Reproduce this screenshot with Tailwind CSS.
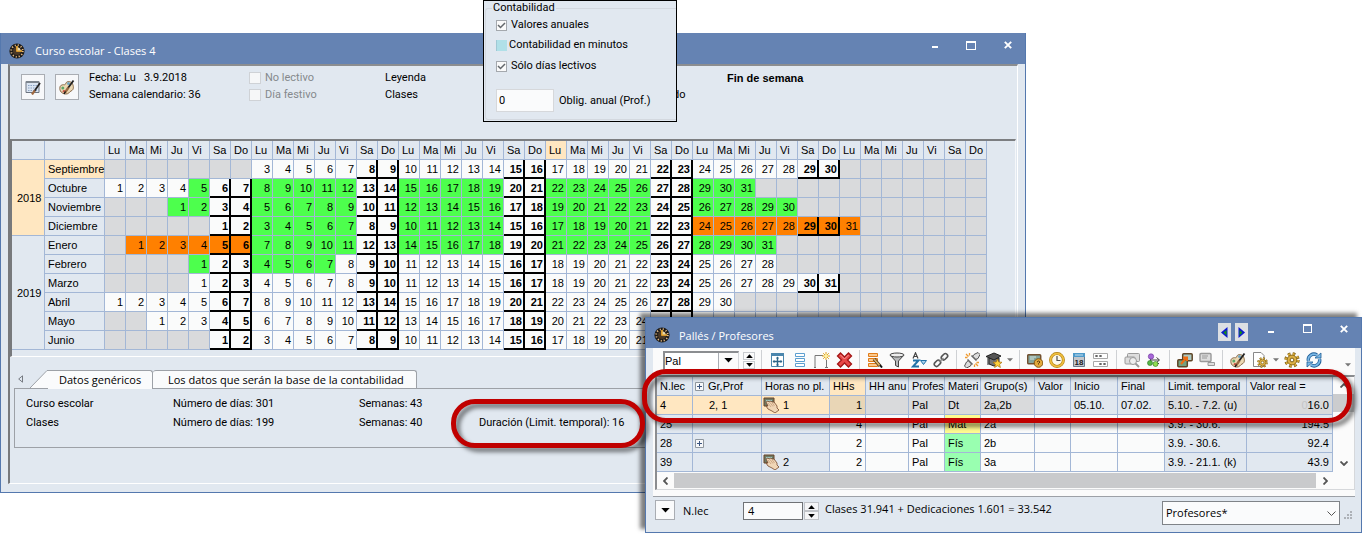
<!DOCTYPE html>
<html lang="es">
<head>
	<meta charset="UTF-8">
	<meta name="viewport" content="width=device-width, initial-scale=1.0">
	<title>Curso escolar - Clases 4</title>
	<script src="https://cdn.jsdelivr.net/npm/@tailwindcss/browser@4"></script>
</head>
<body class="bg-white min-h-screen overflow-hidden relative font-['Liberation_Sans',Arial,sans-serif] text-[11px] leading-[18px] text-black">

	<!-- Shared icons -->
	<svg class="hidden">
		<symbol id="clock" viewBox="0 0 16 16">
			<circle cx="8" cy="8" r="7.6" fill="#1c1a18"/>
			<circle cx="8" cy="8" r="5.8" fill="none" stroke="#e8bd88" stroke-width="1.800" stroke-dasharray="1.1 1.94"/>
			<circle cx="8" cy="8" r="4" fill="#4a3826"/>
			<path d="M8 3v5h5" fill="none" stroke="#ffb52e" stroke-width="1.6"/>
			<path d="M8.6 4.2a4 4 0 0 1 3.2 3.2H8.6z" fill="#e8d9b0"/>
		</symbol>
		<symbol id="palette" viewBox="0 0 16 16">
			<path d="M1 8c-1 4 2 7 6 7 3 0 3-2 5-3 3-1 3-5 1-8-2-2-5-2-6 0-1 3-2 1-4 2C1.600 6.500 1.200 7 1 8z" fill="#ecd9b4" stroke="#8a6a48"/>
			<circle cx="3.800" cy="9" r="1.500" fill="#5aa868"/><circle cx="5" cy="12.300" r="1.300" fill="#cc5548"/><circle cx="9.500" cy="4.500" r="1.500" fill="#6fa6c4"/>
			<path d="M14.500 1.500 9 9" stroke="#222" stroke-width="1.800"/><path d="M9.500 8.500 6 13.500" stroke="#9a6a42" stroke-width="2.400"/><path d="M6.500 12.500 5 15" stroke="#111" stroke-width="1.400"/>
		</symbol>
		<symbol id="hand" viewBox="0 0 16 16">
			<path d="M1 1h10v8H1z" fill="#6d7a66" stroke="#6b4426"/><path d="M3 3h6v3H3z" fill="#9fc4bd"/>
			<path d="M3 5l2-1 1 1 2-1 1 1 2 0 3 4 0 2 2 2-4 3-3-2-4-2-2-3 2 0z" fill="#f0d6b6" stroke="#76482b" stroke-width=".8"/>
			<path d="M5 6l3 4M7 5.500l3 4M9 5.500l2.500 3.500" stroke="#b88c66" stroke-width=".6"/>
		</symbol>
		<symbol id="caret" viewBox="0 0 10 6"><path d="M0 0h10L5 5.500z" fill="currentColor"/></symbol>
		<symbol id="gear" viewBox="0 0 16 16">
			<circle cx="8" cy="8" r="6" fill="none" stroke="#7d5e14" stroke-width="3.400" stroke-dasharray="2.500 2.212"/>
			<circle cx="8" cy="8" r="6" fill="none" stroke="#d9ab38" stroke-width="2" stroke-dasharray="2 2.712"/>
			<circle cx="8" cy="8" r="4.900" fill="#dcb044" stroke="#7d5e14" stroke-width=".8"/>
			<circle cx="8" cy="8" r="1.900" fill="#fbfbfb" stroke="#7d5e14"/>
		</symbol>
		<symbol id="plus" viewBox="0 0 9 9"><path d="M.5.5h8v8h-8z" fill="#f7f8fa" stroke="#8f979f"/><path d="M2 4.500h5M4.500 2v5" stroke="#3b5580"/></symbol>
		<symbol id="close" viewBox="0 0 8 8"><path d="M.8.8l6.400 6.400M7.200.8.8 7.200" stroke="#fff" stroke-width="1.900"/></symbol>
	</svg>

	<!-- Calendar window -->
	<section class="absolute left-0 top-[33px] w-[1026px] bg-[#e1e8f0] border border-t-0 border-[#5478ae] pb-2">
		<header class="h-[31px] bg-[#6583b3] flex items-center pl-2 pr-[13px] pt-1 text-white">
			<svg class="w-4 h-4"><use href="#clock"/></svg>
			<h1 class="ml-[10px] pt-px flex-1 font-['Open_Sans',sans-serif]">Curso escolar - Clases 4</h1>
			<div class="flex items-center gap-7 pb-[15px] h-full">
				<button aria-label="Minimizar" class="w-[6px] h-[2px] mt-2 bg-white"></button>
				<button aria-label="Maximizar" class="w-[10px] h-[9px] mt-1 border border-t-2 border-white"></button>
				<button aria-label="Cerrar" class="mt-1"><svg class="w-2 h-2"><use href="#close"/></svg></button>
			</div>
		</header>

		<div class="mx-[7px] border-t-2 border-l-2 border-r border-b border-t-[#8b8d90] border-l-[#77797c] border-r-white border-b-white">
			<!-- Info and legend -->
			<div class="h-[73px] flex pl-[11px] gap-[10px] font-[Roboto,sans-serif]">
				<button aria-label="Calendario" class="mt-2 w-6 h-[26px] border border-[#a9adb3] bg-[#f7f8fa] flex items-center justify-center">
					<svg class="w-4 h-4" viewBox="0 0 16 16">
						<path d="M1 2.500h13v11H1z" fill="#dbe5f2" stroke="#6c7480"/><path d="M1 2h13v2H1z" fill="#7d858e"/>
						<path d="M3 6.500h9M3 9h9M3 11.500h9" stroke="#8ba3c4" stroke-dasharray="1.500 1"/>
						<path d="M15 4 9.500 12" stroke="#222" stroke-width="1.800"/><path d="M9.800 11.500 7 15.500" stroke="#a06a42" stroke-width="2.200"/>
					</svg>
				</button>
				<button aria-label="Colores" class="mt-2 w-6 h-[26px] border border-[#a9adb3] bg-[#f7f8fa] flex items-center justify-center">
					<svg class="w-4 h-4"><use href="#palette"/></svg>
				</button>
				<div class="pt-[3px] grid grid-cols-[160px_136px_288px_54px_1fr] grid-rows-[17px_18px] flex-1">
					<div class="whitespace-pre">Fecha: Lu   3.9.2018</div>
					<label class="flex items-center gap-1 text-[#85888c]"><input type="checkbox" disabled class="appearance-none w-3 h-3 bg-[#f6f7f8] border border-[#cfd2d6]">No lectivo</label>
					<div>Leyenda</div>
					<div></div>
					<div class="font-bold font-['Liberation_Sans',Arial,sans-serif]">Fin de semana</div>
					<div>Semana calendario: 36</div>
					<label class="flex items-center gap-1 text-[#85888c]"><input type="checkbox" disabled class="appearance-none w-3 h-3 bg-[#f6f7f8] border border-[#cfd2d6]">Día festivo</label>
					<div>Clases</div>
					<div>do</div>
				</div>
			</div>

			<!-- Calendar -->
			<div class="border-t-2 border-l-2 border-b border-t-[#7c7e81] border-l-[#77797c] border-b-white pb-[6px] mr-px border-r border-r-[#f5f7fa]">
				<table class="table-fixed border-separate border-spacing-0 w-[975px]">
					<colgroup id="calendar-cols"><col class="w-[33px]"><col class="w-[60px]"></colgroup>
					<thead><tr id="calendar-head"></tr></thead>
					<tbody id="calendar-body"></tbody>
				</table>
			</div>

			<!-- Tabs -->
			<div class="pt-[13px] pl-2 flex font-['Open_Sans',sans-serif] font-medium leading-4">
				<svg class="w-[5px] h-2 mt-[5px] mr-[7px]" viewBox="0 0 5 8"><path d="M4.500.8v6.400L.7 4z" fill="none" stroke="#777c83"/></svg>
				<svg class="w-[18px] h-[18px] -mb-px relative" viewBox="0 0 18 18"><path d="M0 18 17 .5h1V18z" fill="#fafbfc"/><path d="M0 18 17 .5h1" fill="none" stroke="#9da1a7"/></svg>
				<button class="h-[19px] -mb-px relative w-[105px] pl-[11px] text-left bg-[#fafbfc] border-t border-r border-[#9da1a7] rounded-tr-[3px]">Datos genéricos</button>
				<button class="h-[18px] pr-3 pl-[15px] bg-[#fafbfc] border-t border-r border-[#9da1a7] rounded-t-[3px]">Los datos que serán la base de la contabilidad</button>
			</div>
			<div class="ml-1 mb-[35px] h-[60px] border border-r-0 border-[#9da1a7] pl-[11px] pt-[6px] grid grid-cols-[147px_186px_120px_1fr] grid-rows-[19px_19px] font-[Roboto,sans-serif]">
				<div>Curso escolar</div><div>Número de días: 301</div><div>Semanas: 43</div><div></div>
				<div>Clases</div><div>Número de días: 199</div><div>Semanas: 40</div><div>Duración (Limit. temporal): 16</div>
			</div>
		</div>
	</section>

	<!-- Accounting options -->
	<section class="absolute left-[483px] top-0 w-[194px] h-[122px] border border-black bg-[#e1e8f0] pl-px pt-[6px] font-[Roboto,sans-serif]">
		<fieldset class="h-[113px] border border-r-0 border-[#d3d8df] rounded-l-[3px] pl-[10px]">
			<legend class="px-px -ml-1 leading-[2px]">Contabilidad</legend>
			<label class="flex items-center gap-1 mt-[7px]">
				<input type="checkbox" checked class="appearance-none w-[11px] h-[11px] bg-[#fafafa] border border-[#a4a8ad]">
				<svg class="w-[9px] h-[7px] -ml-[14px] mr-px" viewBox="0 0 9 7"><path d="M1 3l2.500 2.500L8 1" fill="none" stroke="#63676b" stroke-width="1.500"/></svg>Valores anuales
			</label>
			<label class="flex items-center gap-[2px] mt-[2px]">
				<input type="checkbox" class="appearance-none w-[11px] h-[11px] bg-[#b0e0e8] border-l border-[#a0c8d4]">Contabilidad en minutos
			</label>
			<label class="flex items-center gap-1 mt-[3px]">
				<input type="checkbox" checked class="appearance-none w-[11px] h-[11px] bg-[#fafafa] border border-[#a4a8ad]">
				<svg class="w-[9px] h-[7px] -ml-[14px] mr-px" viewBox="0 0 9 7"><path d="M1 3l2.500 2.500L8 1" fill="none" stroke="#63676b" stroke-width="1.500"/></svg>Sólo días lectivos
			</label>
			<div class="flex mt-[14px] items-center">
				<input id="oblig" value="0" class="w-[58px] h-[23px] px-[2px] bg-[#fafbfc] border border-[#d6d8db]">
				<label for="oblig" class="ml-[5px] whitespace-nowrap">Oblig. anual (Prof.)</label>
			</div>
		</fieldset>
	</section>

	<!-- Lessons window -->
	<section class="absolute left-[645px] top-[317px] w-[717px] bg-[#e1e8f0] border border-[#5478ae] shadow-[-5px_-4px_4px_rgba(0,0,0,0.5)]">
		<header class="h-[30px] bg-[#6583b3] flex pl-2 pr-[13px] text-white">
			<svg class="w-4 h-4 mt-[9px]"><use href="#clock"/></svg>
			<h2 class="ml-[9px] mt-[9px] flex-1 font-['Open_Sans',sans-serif]">Pallés / Profesores</h2>
			<button aria-label="Anterior" class="mt-[5px] mr-1 w-[13px] h-[18px] bg-[#dcdfe3] flex items-center justify-center"><svg class="w-[7px] h-[11px]" viewBox="0 0 7 11"><path d="M6.500 0v11L0 5.500z" fill="#0b18d0"/><path d="M5.500 3v5.500L2.500 5.500z" fill="#169016"/></svg></button>
			<button aria-label="Siguiente" class="mt-[5px] mr-5 w-[13px] h-[18px] bg-[#dcdfe3] flex items-center justify-center"><svg class="w-[7px] h-[11px]" viewBox="0 0 7 11"><path d="M.5 0v11L7 5.500z" fill="#0b18d0"/><path d="M1.500 3v5.500l3-3z" fill="#169016"/></svg></button>
			<button aria-label="Minimizar" class="w-[6px] h-[2px] mt-[13px] mr-[29px] bg-white"></button>
			<button aria-label="Maximizar" class="w-[9px] h-[9px] mt-[6px] mr-7 border border-t-2 border-white"></button>
			<button aria-label="Cerrar" class="mt-[7px] h-2"><svg class="w-2 h-2"><use href="#close"/></svg></button>
		</header>

		<!-- Toolbar -->
		<div class="ml-[7px] mr-[6px] h-[24px] bg-[#fbfbfb] flex items-center pl-[10px] text-[#444]">
			<div class="flex w-[76px] h-[19px] border-2 border-r border-b border-[#8b8d90] border-r-[#d6d8db] border-b-[#d6d8db]">
				<input aria-label="Profesor" value="Pal" class="w-[53px] bg-white text-black">
				<button aria-label="Abrir lista" class="w-[20px] border-l border-[#a9adb3] flex items-center justify-center text-black"><svg class="w-[9px] h-[5px]"><use href="#caret"/></svg></button>
			</div>
			<div class="ml-1 mr-[9px] flex flex-col gap-px w-3 text-black">
				<button aria-label="Subir" class="h-2 border border-[#c9ccd0] flex items-center justify-center"><svg class="w-[7px] h-1 rotate-180"><use href="#caret"/></svg></button>
				<button aria-label="Bajar" class="h-2 border border-[#c9ccd0] flex items-center justify-center"><svg class="w-[7px] h-1"><use href="#caret"/></svg></button>
			</div>
			<i class="w-px h-5 bg-[#cfd1d4] -ml-[3px] mr-[5px]"></i>
			<button aria-label="Ajustar ventana" class="w-[22px] flex justify-center"><svg class="w-4 h-4" viewBox="0 0 16 16"><path d="M1.500 1.500h12v13h-12z" fill="#fff" stroke="#4b86ad"/><path d="M1 1h13v3H1z" fill="#4b86ad"/><path d="M7.500 5v9M3 9.500h9" stroke="#2e6688" stroke-width="1.400"/><path d="M6 6.500l1.500-2L9 6.500zM6 12.500l1.500 2 1.500-2zM4.500 8v3l-2-1.500zM10.500 8v3l2-1.500z" fill="#2e6688"/></svg></button>
			<button aria-label="Filas" class="w-[22px] flex justify-center"><svg class="w-4 h-4" viewBox="0 0 16 16"><path d="M3.500 1.500h9v3h-9zM3.500 6.500h9v3h-9zM3.500 11.500h9v3h-9z" fill="#fff" stroke="#5d9fd0"/></svg></button>
			<button aria-label="Nuevo" class="w-[22px] flex justify-center"><svg class="w-4 h-4" viewBox="0 0 16 16"><path d="M1 15.500V3.500h8M12.500 8v7.500M0 15.500h2M11 15.500h3" fill="none" stroke="#777"/><path d="M12 0v8M8 4h8M9.200 1.200l5.600 5.600M14.800 1.200 9.200 6.800" stroke="#e0a21c"/><circle cx="12" cy="4" r="1.700" fill="#fff3a0"/></svg></button>
			<button aria-label="Borrar" class="w-[22px] flex justify-center"><svg class="w-[17px] h-4" viewBox="0 0 16 16"><path d="M4 1 8 5l4-4 3 3-4 4 4 4-3 3-4-4-4 4-3-3 4-4-4-4z" fill="#e84747" stroke="#a31515" stroke-width="1.300"/><path d="M4 3l4 4 4-4" fill="none" stroke="#f89898"/></svg></button>
			<i class="w-px h-5 bg-[#cfd1d4] mx-1"></i>
			<button aria-label="Editar filas" class="w-[22px] flex justify-center"><svg class="w-4 h-4" viewBox="0 0 16 16"><path d="M1.500 1.500h9v3h-9zM1.500 6.500h9v3h-9zM1.500 11.500h9v3h-9z" fill="#fbc98d" stroke="#e07b18"/><path d="M7 7l6 7" stroke="#4d3a22" stroke-width="3.400"/><path d="M7 7l6 7" stroke="#d9b26a" stroke-width="1.800"/><path d="M13 13l2 2.500" stroke="#111" stroke-width="2"/></svg></button>
			<button aria-label="Filtro" class="w-[22px] flex justify-center"><svg class="w-4 h-4" viewBox="0 0 16 16"><path d="M1 3h14L9.500 9v6l-3-1.500V9z" fill="#b8babc" stroke="#444"/><ellipse cx="8" cy="3" rx="7" ry="2" fill="#eee" stroke="#444"/></svg></button>
			<button aria-label="Ordenar" class="w-[22px] flex justify-center"><svg class="w-4 h-4" viewBox="0 0 16 16"><path d="M2 6.500 4.500.8 7 6.500M3 4.500h3" fill="none" stroke="#444" stroke-width="1.200"/><path d="M2 8.500h5.500L2 14.500h6" fill="none" stroke="#2272a8" stroke-width="2"/><path d="M9.500 8.500h6l-3 4z" fill="#a9d0ea" stroke="#2272a8"/></svg></button>
			<button aria-label="Vincular" class="w-[22px] flex justify-center"><svg class="w-4 h-4" viewBox="0 0 16 16" fill="none" stroke="#555"><rect x="8" y="2.500" width="7" height="4.500" rx="2.200" transform="rotate(-45 11.500 4.800)" stroke-width="1.600"/><rect x="1" y="9" width="7" height="4.500" rx="2.200" transform="rotate(-45 4.500 11.300)" stroke-width="1.600"/><path d="M6 10l4.500-4" stroke="#888" stroke-width="1.500"/></svg></button>
			<i class="w-px h-5 bg-[#cfd1d4] mx-1"></i>
			<button aria-label="Conectar" class="w-[22px] flex justify-center"><svg class="w-4 h-4" viewBox="0 0 16 16"><path d="M8.500 4.500l3 3 2.500-1 2-4-2-2-4 2z" fill="#ddd" stroke="#555"/><path d="M4.500 8.500l3 3-1 2.500-4 2-2-2 2-4z" fill="#ddd" stroke="#555"/><path d="M7.500 3.500l5 5M3.500 7.500l5 5" stroke="#666" stroke-width="1.600"/><path d="M2 2l2.500 2.500M5.500 1v2.500M1 5.500h2.500M14 14l-2.500-2.500M15 10.500h-2.500M10.500 15v-2.500" stroke="#ef9b31" stroke-width="1.300"/></svg></button>
			<button aria-label="Alumnos" class="w-[22px] flex justify-center"><svg class="w-4 h-4" viewBox="0 0 16 16"><path d="M3 6v6l5 2 5-2V6z" fill="#777" stroke="#222"/><path d="M0 4.500 8 1l7 3-7 4z" fill="#555" stroke="#222"/><path d="M2 6v7" stroke="#222"/><path d="M11.500 7l1.300 3 3.200.3-2.400 2 .8 3.200-2.900-1.800-2.900 1.800.8-3.200-2.400-2 3.200-.3z" fill="#ffd23c" stroke="#a87008" stroke-width=".7"/></svg></button>
			<span class="w-[10px] flex justify-center text-[#777]"><svg class="w-[6px] h-1"><use href="#caret"/></svg></span>
			<i class="w-px h-5 bg-[#cfd1d4] mx-1"></i>
			<button aria-label="Pizarra" class="w-[22px] flex justify-center"><svg class="w-4 h-4" viewBox="0 0 16 16"><rect x=".7" y="2.700" width="13" height="9" rx="1" fill="#85a59d" stroke="#72502f" stroke-width="1.500"/><path d="M3 5h6M3 7h4" stroke="#d5e5df"/><circle cx="11.500" cy="11" r="4.300" fill="#e2a93b" stroke="#875810"/><path d="M10 10q1.500-2 3 0l-1.500 1.500v1" fill="none" stroke="#5c3a06"/></svg></button>
			<button aria-label="Hora" class="w-[22px] flex justify-center"><svg class="w-4 h-4" viewBox="0 0 16 16"><circle cx="8" cy="8" r="6.400" fill="#fdf9ec" stroke="#ad7d0d" stroke-width="3"/><circle cx="8" cy="8" r="6.400" fill="none" stroke="#f0c040" stroke-width="1.700"/><path d="M8 4v4.500h3.500" fill="none" stroke="#4b4b4b" stroke-width="1.200"/></svg></button>
			<button aria-label="Calendario" class="w-[22px] flex justify-center"><svg class="w-4 h-4" viewBox="0 0 16 16"><path d="M2.500 1.500h11v13h-11z" fill="#c3c7cc" stroke="#6b7b8c"/><path d="M2 1h12v4H2z" fill="#4e9aca"/><path d="M4 3h8" stroke="#c6e0f0"/><text x="8" y="13" font-size="8" font-weight="bold" text-anchor="middle" fill="#222">18</text></svg></button>
			<button aria-label="Campos" class="w-[22px] flex justify-center"><svg class="w-4 h-4" viewBox="0 0 16 16"><path d="M.5 1.500h14v5H.5zM.5 9.500h14v5H.5z" fill="#fff" stroke="#a8a8a8"/><path d="M2.500 3l2 2M4.500 3l-2 2M6.500 3l2 2M8.500 3l-2 2M6.500 11l2 2M8.500 11l-2 2M10.500 11l2 2M12.500 11l-2 2" stroke="#333"/></svg></button>
			<i class="w-px h-5 bg-[#cfd1d4] mx-1"></i>
			<button aria-label="Buscar" class="w-[22px] flex justify-center"><svg class="w-4 h-4" viewBox="0 0 16 16" fill="#ddd" stroke="#999"><rect x="3.500" y="1.500" width="12" height="8" rx="1"/><rect x="1" y="5" width="10" height="7" rx="1"/><circle cx="9" cy="9" r="3.500" fill="#eee"/><path d="M11.500 11.500 15 15" stroke-width="2"/></svg></button>
			<button aria-label="Nodos" class="w-[22px] flex justify-center"><svg class="w-4 h-4" viewBox="0 0 16 16"><path d="M4.500 4.500v6M5 8h8M8 11.500h5M10.500 5.500 13.500 8l-3 2.500" fill="none" stroke="#444"/><circle cx="5" cy="4.500" r="2.700" fill="#a868d8" stroke="#6a3098" stroke-width=".6"/><circle cx="4" cy="11" r="2.500" fill="#58b648" stroke="#2b7420" stroke-width=".6"/><circle cx="9.500" cy="12" r="2.500" fill="#90dc50" stroke="#2b7420" stroke-width=".6"/></svg></button>
			<i class="w-px h-5 bg-[#cfd1d4] mx-1"></i>
			<button aria-label="Mover" class="w-[22px] flex justify-center"><svg class="w-4 h-4" viewBox="0 0 16 16"><rect x="5.700" y="1.700" width="9.500" height="7" rx="1" fill="#aecac2" stroke="#5f4526" stroke-width="1.500"/><rect x=".8" y="7.700" width="9.500" height="7" rx="1" fill="#74a080" stroke="#5f4526" stroke-width="1.500"/><path d="M4 12 9 6M6 5.500h4V9" fill="none" stroke="#f06c12" stroke-width="2"/></svg></button>
			<button aria-label="Ocultar" class="w-[22px] flex justify-center"><svg class="w-4 h-4" viewBox="0 0 16 16" fill="#ddd" stroke="#999"><rect x="1" y="1.500" width="11" height="8" rx="1" stroke-width="1.400"/><path d="M3 4h6M3 6h5"/><path d="M9 10.500h6.500v3H9z"/></svg></button>
			<i class="w-px h-5 bg-[#cfd1d4] mx-1"></i>
			<button aria-label="Colores" class="w-[22px] flex justify-center"><svg class="w-4 h-4"><use href="#palette"/></svg></button>
			<button aria-label="Ajustes de página" class="w-[22px] flex justify-center"><svg class="w-4 h-4" viewBox="0 0 16 16"><path d="M1.500.5H9l3 3v11H1.500z" fill="#fff" stroke="#888"/><use href="#gear" x="5" y="5" width="11" height="11"/></svg></button>
			<span class="w-[10px] flex justify-center text-[#777]"><svg class="w-[6px] h-1"><use href="#caret"/></svg></span>
			<button aria-label="Ajustes" class="w-[22px] flex justify-center"><svg class="w-4 h-4"><use href="#gear"/></svg></button>
			<button aria-label="Actualizar" class="w-[22px] flex justify-center"><svg class="w-4 h-4" viewBox="0 0 16 16" fill="none"><path d="M2.500 9A5.500 5.500 0 0 1 11 3.200M13.500 7A5.500 5.500 0 0 1 5 12.800" stroke="#1f5d96" stroke-width="3.400"/><path d="M2.500 9A5.500 5.500 0 0 1 11 3.200M13.500 7A5.500 5.500 0 0 1 5 12.800" stroke="#7ab8e6" stroke-width="1.800"/><path d="M9 6h6V1zM7 10H1v5z" fill="#7ab8e6" stroke="#1f5d96" stroke-width=".8"/></svg></button>
			<span class="ml-auto mr-1 mt-[10px] text-[#777]"><svg class="w-[6px] h-1"><use href="#caret"/></svg></span>
		</div>

		<!-- Lessons grid -->
		<div class="ml-[7px] mr-[6px] pt-[3px] pl-[2px] pb-[6px] bg-[#fbfbfb] border-b border-[#9da1a7]">
			<div class="border-t-2 border-l-2 border-b border-r border-[#8b8d90] border-b-[#d6d8db] border-r-[#d6d8db]">
				<div class="flex">
					<table class="table-fixed border-separate border-spacing-0 w-[676px]">
						<colgroup>
							<col class="w-[36px]"><col class="w-[69px]"><col class="w-[68px]"><col class="w-[36px]"><col class="w-[43px]"><col class="w-[36px]"><col class="w-[36px]"><col class="w-[54px]"><col class="w-[36px]"><col class="w-[47px]"><col class="w-[47px]"><col class="w-[82px]"><col class="w-[86px]">
						</colgroup>
						<thead><tr id="lesson-head"></tr></thead>
						<tbody id="lesson-body"></tbody>
					</table>
					<div class="flex-1 flex flex-col items-center justify-between py-[6px]">
						<svg class="w-2 h-[5px]" viewBox="0 0 8 5"><path d="M.5 4.500 4 1l3.500 3.500" fill="none" stroke="#555" stroke-width="1.800"/></svg>
						<i class="w-full h-[18px] bg-[#cbccce] -mt-[44px]"></i>
						<svg class="w-2 h-[5px]" viewBox="0 0 8 5"><path d="M.5.5 4 4 7.500.5" fill="none" stroke="#555" stroke-width="1.800"/></svg>
					</div>
				</div>
				<div class="flex items-center h-[17px] pr-[19px]">
					<svg class="w-[5px] h-2 mx-[6px]" viewBox="0 0 5 8"><path d="M4.500.5 1 4l3.500 3.500" fill="none" stroke="#555" stroke-width="1.800"/></svg>
					<i class="flex-1 h-[15px] bg-[#c9cacc]"></i>
					<svg class="w-[5px] h-2 mx-[7px]" viewBox="0 0 5 8"><path d="M.5.5 4 4 .5 7.500" fill="none" stroke="#555" stroke-width="1.800"/></svg>
				</div>
			</div>
		</div>

		<!-- Footer -->
		<div class="h-[35px] pl-[9px] pr-2 pt-[3px] flex items-start font-['Open_Sans',sans-serif]">
			<button aria-label="Ver detalles" class="w-5 h-5 bg-[#fafbfc] border border-[#a9adb3] flex items-center justify-center text-black"><svg class="w-[9px] h-[5px]"><use href="#caret"/></svg></button>
			<label for="nlec" class="ml-2 mt-[2px] w-[60px]">N.lec</label>
			<input id="nlec" value="4" class="mt-[2px] w-[60px] h-[18px] px-1 bg-[#fafbfc] border border-[#6f7276]">
			<div class="ml-px mt-[2px] flex flex-col w-[15px] text-black">
				<button aria-label="Más" class="h-[9px] border border-[#c0c3c8] bg-[#f4f5f7] flex items-center justify-center"><svg class="w-[7px] h-1 rotate-180"><use href="#caret"/></svg></button>
				<button aria-label="Menos" class="h-[9px] border border-[#c0c3c8] bg-[#f4f5f7] flex items-center justify-center"><svg class="w-[7px] h-1"><use href="#caret"/></svg></button>
			</div>
			<div class="ml-[6px]">Clases 31.941 + Dedicaciones 1.601 = 33.542</div>
			<div class="relative ml-auto mt-px mr-[13px]">
				<select aria-label="Vista" class="appearance-none w-[178px] h-[24px] px-[3px] bg-[#fafbfc] border border-[#7f8388]"><option>Profesores*</option></select>
				<svg class="absolute right-1 top-[10px] w-[9px] h-[5px]" viewBox="0 0 9 5"><path d="M.5.5l4 4 4-4" fill="none" stroke="#555"/></svg>
			</div>
		</div>
		<svg class="absolute right-[9px] bottom-[13px] w-2 h-2" viewBox="0 0 8 8" fill="#adb1b7"><path d="M6 0h2v2H6zM3 3h2v2H3zM6 3h2v2H6zM0 6h2v2H0zM3 6h2v2H3zM6 6h2v2H6z"/></svg>
	</section>

	<!-- Highlight rings -->
	<div class="absolute left-[451px] top-[399px] w-[194px] h-[49px] rounded-[24px] border-[5px] border-[#c00000] drop-shadow-[4px_4px_2px_rgba(0,0,0,0.5)] pointer-events-none"></div>
	<div class="absolute left-[642px] top-[369px] w-[710px] h-[54px] rounded-[24px] border-[5px] border-[#c00000] drop-shadow-[4px_4px_2px_rgba(0,0,0,0.5)] pointer-events-none"></div>

<script>
		const days = ["Lu", "Ma", "Mi", "Ju", "Vi", "Sa", "Do"]

		// start: column of the first day shown, green / orange: [from, to] day ranges
		const months = [
			{ name: "Septiembre", start: 7, first: 3, last: 30 },
			{ name: "Octubre", start: 0, first: 1, last: 31, green: [5, 31] },
			{ name: "Noviembre", start: 3, first: 1, last: 30, green: [1, 30] },
			{ name: "Diciembre", start: 5, first: 1, last: 31, green: [3, 23], orange: [24, 31] },
			{ name: "Enero", start: 1, first: 1, last: 31, green: [7, 31], orange: [1, 6] },
			{ name: "Febrero", start: 4, first: 1, last: 28, green: [1, 7] },
			{ name: "Marzo", start: 4, first: 1, last: 31 },
			{ name: "Abril", start: 0, first: 1, last: 30 },
			{ name: "Mayo", start: 2, first: 1, last: 31 },
			{ name: "Junio", start: 5, first: 1, last: 30 },
		]

		const inRange = (day, range) => range && day >= range[0] && day <= range[1]

		function drawCalendar(){
			const line = "h-[19px] p-0 leading-4 border-r border-b border-[#a3b7d6] "
			let head = `<th class="${line}"></th><th class="${line}"></th>`
			let cols = ""
			for (let c = 0; c < 42; c++) {
				cols += `<col class="w-[21px]">`
				head += `<th class="${line} pl-[3px] text-left font-normal ${c === 21 ? "bg-[#ffe7c1]" : ""}">${days[c % 7]}</th>`
			}
			document.getElementById("calendar-cols").innerHTML += cols
			document.getElementById("calendar-head").innerHTML = head

			let body = ""
			months.forEach((month, i) => {
				body += "<tr>"
				if (i === 0) body += `<th rowspan="4" class="${line} pl-[5px] text-left font-normal bg-[#ffe7c1]">2018</th>`
				if (i === 4) body += `<th rowspan="6" class="${line} pl-[5px] text-left font-normal">2019</th>`
				body += `<th class="${line} pl-[3px] text-left font-normal ${i === 0 ? "bg-[#ffe7c1]" : ""}">${month.name}</th>`
				for (let c = 0; c < 42; c++) {
					const day = c - month.start + month.first
					if (c < month.start || day > month.last) {
						body += `<td class="${line} bg-[#d9dadc]"></td>`
						continue
					}
					const weekend = c % 7 > 4
					let color = "bg-[#fafbfb]"
					if (inRange(day, month.orange)) color = "bg-[#ff8000]"
					else if (!weekend && inRange(day, month.green)) color = "bg-[#4dff4d]"
					body += weekend
						? `<td class="h-[19px] p-0 pr-px leading-4 border-r-2 border-b-2 border-black text-right font-bold text-black ${color}">${day}</td>`
						: `<td class="${line} pr-[2px] text-right ${color}">${day}</td>`
				}
				body += "</tr>"
			})
			document.getElementById("calendar-body").innerHTML = body
		}

		const plus = `<svg class="w-[9px] h-[9px] shrink-0"><use href="#plus"/></svg>`
		const hand = `<svg class="w-4 h-4 shrink-0"><use href="#hand"/></svg>`
		const titles = ["N.lec", "Gr,Prof", "Horas no pl.", "HHs", "HH anu", "Profes", "Materi", "Grupo(s)", "Valor", "Inicio", "Final", "Limit. temporal", "Valor real ="]
		const lessons = [
			["4", `<span class="pl-[14px]">2, 1</span>`, hand + "1", "1", "", "Pal", "Dt", "2a,2b", "", "05.10.", "07.02.", "5.10. - 7.2. (u)", `<span class="text-[#c4c5c7] -mr-1">0</span>16.0`],
			["25", "", "", "4", "", "Pal", "Mat", "2a", "", "", "", "3.9. - 30.6.", "194.5"],
			["28", plus, "", "2", "", "Pal", "Fís", "2b", "", "", "", "3.9. - 30.6.", "92.4"],
			["39", "", hand + "2", "2", "", "Pal", "Fís", "3a", "", "", "", "3.9. - 21.1. (k)", "43.9"],
		]

		function cellColor(row, col){
			if (row === 0) {
				if (col < 3) return "bg-[#ffe7c1]"
				if (col === 3) return "bg-[#e9d6b6]"
				if (col < 8 || col > 10) return "bg-[#d9dadc]"
				return "bg-[#e1e8f0]"
			}
			if (col < 3 || col > 10) return "bg-[#e1e8f0]"
			if (col === 6) return row === 1 ? "bg-[#fffa90]" : "bg-[#99ffb0]"
			return "bg-[#fafbfb]"
		}

		function drawLessons(){
			const line = "h-[19px] p-0 leading-4 border-r border-b border-[#a3b7d6] overflow-hidden whitespace-nowrap "
			document.getElementById("lesson-head").innerHTML = titles.map((title, col) =>
				`<th class="${line} font-normal ${col === 3 ? "bg-[#ffe7c1]" : "bg-[#e1e8f0]"}"><div class="flex items-center gap-1 ${col === 1 ? "pl-[2px]" : "pl-[3px]"}">${col === 1 ? plus : ""}${title}</div></th>`).join("")
			document.getElementById("lesson-body").innerHTML = lessons.map((cells, row) =>
				"<tr>" + cells.map((cell, col) => {
					let align = "pl-[3px]"
					if (col === 3 || col === 12) align = "justify-end pr-[3px]"
					if (col === 1) align = "pl-[2px]"
					if (col === 2) align = "pl-px"
					return `<td class="${line} ${cellColor(row, col)}"><div class="flex items-center gap-1 h-4 ${align}">${cell}</div></td>`
				}).join("") + "</tr>").join("")
		}

		drawCalendar()
		drawLessons()
</script>
</body>
</html>
